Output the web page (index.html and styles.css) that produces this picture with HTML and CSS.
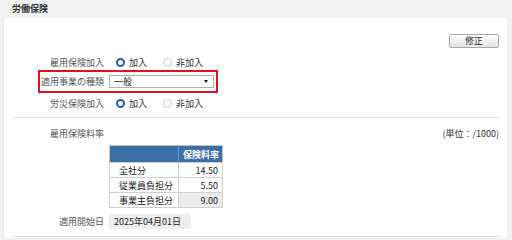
FILE: index.html
```html
<!DOCTYPE html>
<html lang="ja">
<head>
<meta charset="utf-8">
<title>労働保険</title>
<link rel="stylesheet" href="styles.css">
</head>
<body>
<div class="title">労働保険</div>
<div class="panel">
  <div class="btn-row"><button class="btn">修正</button></div>

  <div class="row">
    <div class="label">雇用保険加入</div>
    <div class="radios">
      <span class="radio on"></span><span class="rtext">加入</span>
      <span class="radio"></span><span class="rtext">非加入</span>
    </div>
  </div>

  <div class="row hl">
    <div class="label">適用事業の種類</div>
    <div class="select"><span>一般</span><span class="caret"></span></div>
  </div>

  <div class="row r3">
    <div class="label">労災保険加入</div>
    <div class="radios">
      <span class="radio on"></span><span class="rtext">加入</span>
      <span class="radio"></span><span class="rtext">非加入</span>
    </div>
  </div>

  <div class="sep"></div>

  <div class="rate-head">
    <div class="row plain">
      <div class="label">雇用保険料率</div>
    </div>
    <div class="unit">(単位：/1000)</div>
  </div>

  <table class="rates">
    <colgroup><col class="c1"><col class="c2"></colgroup>
    <tr><th class="blank"></th><th>保険料率</th></tr>
    <tr><td class="name">全社分</td><td class="val">14.50</td></tr>
    <tr><td class="name">従業員負担分</td><td class="val">5.50</td></tr>
    <tr><td class="name">事業主負担分</td><td class="val gray">9.00</td></tr>
  </table>

  <div class="row date">
    <div class="label">適用開始日</div>
    <div class="datebox">2025年04月01日</div>
  </div>

  <div class="sep last"></div>
</div>
</body>
</html>
```

FILE: styles.css
```css
html, body {
  margin: 0;
  padding: 0;
}
body {
  background: #f2f2f2;
  font-family: "Noto Sans CJK JP", "Noto Sans", sans-serif;
  font-size: 9px;
  color: #333;
  width: 512px;
  height: 238px;
  overflow: hidden;
}
.title {
  height: 18px;
  line-height: 18px;
  padding-left: 12px;
  font-weight: bold;
  font-size: 9px;
  color: #333;
}
.panel {
  margin-left: 3px;
  width: 504px;
  box-sizing: border-box;
  background: #fff;
  padding: 16px 7px 0 9px;
  height: 220px;
  border-left: 1px solid #e6e6e6;
}
.btn-row {
  display: flex;
  justify-content: flex-end;
  padding-right: 1px;
}
.btn {
  width: 50px;
  height: 14px;
  padding: 0;
  border: 1px solid #a8a8a8;
  border-radius: 2px;
  background: linear-gradient(#fcfcfc, #e4e4e4);
  font-family: inherit;
  font-size: 9px;
  line-height: 12px;
  color: #333;
}
.row {
  display: flex;
  align-items: center;
  height: 14px;
  margin-left: 25px;
  padding-left: 2px;
  margin-top: 7px;
}
.label {
  width: 64px;
  text-align: right;
  color: #555;
  white-space: nowrap;
  flex: none;
}
.radios {
  display: flex;
  align-items: center;
  margin-left: 12px;
}
.radio {
  width: 9px;
  height: 9px;
  box-sizing: border-box;
  border-radius: 50%;
  border: 1px solid #c8c8c8;
  background: #fff;
}
.radio.on {
  border: 2.5px solid #1d5fb8;
}
.rtext {
  margin-left: 4px;
  margin-right: 16px;
}
.row.hl {
  height: 19px;
  width: 176px;
  margin-top: 1px;
  padding-left: 0;
  border: 2px solid #e3101b;
}
.select {
  margin-left: 5px;
  width: 105px;
  height: 13px;
  box-sizing: border-box;
  border: 1px solid #b0b0b0;
  display: flex;
  align-items: center;
  justify-content: space-between;
  padding: 0 5px 0 4px;
  color: #222;
}
.caret {
  width: 0;
  height: 0;
  border-left: 2.5px solid transparent;
  border-right: 2.5px solid transparent;
  border-top: 3px solid #111;
}
.row.r3 {
  margin-top: 3px;
}
.sep {
  height: 1px;
  background: #e4e4e4;
  margin-top: 7px;
}
.rate-head {
  display: flex;
  align-items: center;
  justify-content: space-between;
  margin-top: 8px;
  height: 14px;
}
.rate-head .row {
  margin-top: 0;
}
.unit {
  margin-right: 1px;
  color: #333;
}
.rates {
  border-collapse: collapse;
  table-layout: fixed;
  margin-left: 96px;
  margin-top: 5px;
  width: 113px;
  border: 1px solid #c4c4c4;
}
.rates col.c1 {
  width: 69px;
}
.rates col.c2 {
  width: 44px;
}
.rates th {
  background: #3a6fa8;
  color: #fff;
  font-weight: bold;
  height: 16px;
  padding: 0 3px 0 0;
  text-align: right;
  white-space: nowrap;
  border-left: 1px solid #6a92bf;
}
.rates th.blank {
  border-left: none;
}
.rates td {
  height: 14px;
  padding: 0;
  border: 1px solid #cfcfcf;
  color: #222;
  white-space: nowrap;
}
.rates td.name {
  padding-left: 9px;
}
.rates td.val {
  text-align: right;
  padding-right: 4px;
}
.rates td.gray {
  background: #ebebeb;
}
.row.date {
  margin-top: 6px;
  height: 15px;
}
.datebox {
  margin-left: 5px;
  width: 82px;
  height: 15px;
  line-height: 15px;
  background: #ededed;
  padding-left: 5px;
  box-sizing: border-box;
  color: #222;
}
.sep.last {
  margin-top: 7px;
}
```
